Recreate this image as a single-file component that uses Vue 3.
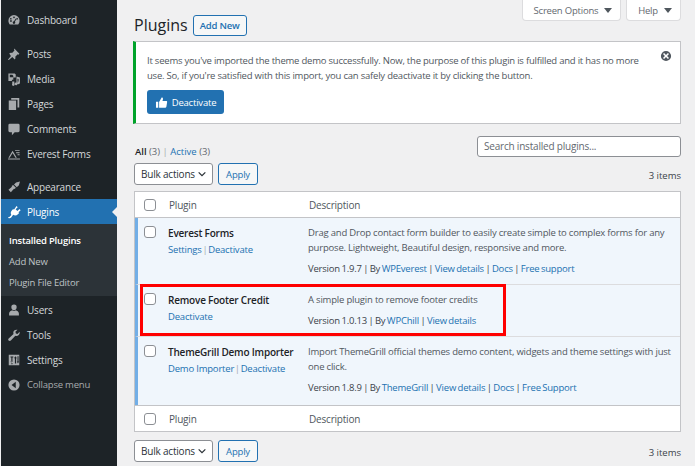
<script setup>
const menu1 = [{ id: 'posts', t: 'Posts' }, { id: 'media', t: 'Media' }, { id: 'pages', t: 'Pages' }, { id: 'comments', t: 'Comments' }, { id: 'everest', t: 'Everest Forms' }]
const menu3 = [{ id: 'users', t: 'Users' }, { id: 'tools', t: 'Tools' }, { id: 'settings', t: 'Settings' }]
const plugins = [
  { name: 'Everest Forms', cls: 'r1', actions: ['Settings', 'Deactivate'], desc: 'Drag and Drop contact form builder to easily create simple to complex forms for any purpose. Lightweight, Beautiful design, responsive and more.', ver: '1.9.7', by: 'WPEverest', links: ['View details', 'Docs', 'Free support'] },
  { name: 'Remove Footer Credit', cls: 'r2', actions: ['Deactivate'], desc: 'A simple plugin to remove footer credits', ver: '1.0.13', by: 'WPChill', links: ['View details'] },
  { name: 'ThemeGrill Demo Importer', cls: 'r3', actions: ['Demo Importer', 'Deactivate'], desc: 'Import ThemeGrill official themes demo content, widgets and theme settings with just one click.', ver: '1.8.9', by: 'ThemeGrill', links: ['View details', 'Docs', 'Free Support'] }
]
</script>

<template>
  <div class="page">
    <aside class="side">
      <div class="item first">
        <svg class="ic" viewBox="0 0 20 20"><path d="M10 3a8 8 0 0 0-8 8c0 2 .8 3.900 2 5.300h12a8 8 0 0 0 2-5.300 8 8 0 0 0-8-8zM10 5a1.200 1.200 0 1 1 0 2.400A1.200 1.200 0 0 1 10 5zM5.500 7a1.200 1.200 0 1 1 0 2.400 1.200 1.200 0 0 1 0-2.400zM14.500 7a1.200 1.200 0 1 1 0 2.400 1.200 1.200 0 0 1 0-2.400zM4.500 11.500a1.200 1.200 0 1 1 0 .1zM13.500 8.500l-2.200 4a1.800 1.800 0 1 1-1.300-.6l2.600-3.900z" fill-rule="evenodd"/></svg>
        <span>Dashboard</span>
      </div>
      <div class="group">
        <div v-for="m in menu1" :key="m.id" class="item">
          <svg class="ic" viewBox="0 0 20 20">
            <path v-if="m.id === 'posts'" d="M10.400 2.300l7.300 7.300-1.400 1.400-1-.6-3.500 3.500c.5 1.500.3 3-.7 4l-3.500-3.500-5 4-1.300-.3 4.300-5.400L3.200 9.300c1-1 2.500-1.200 4-.7l3.500-3.500-.6-1z"/>
            <path v-else-if="m.id === 'media'" fill-rule="evenodd" d="M2 2h9l1.500 1.500V8H9v3H7v2H2zM4 4v3.500h5V5.500L7.500 4zM13.500 6.500l5 1.200v7.800a2 2 0 1 1-2-2V10l-1.500-.4v7.400a2 2 0 1 1-1.500-2zM7.500 13.500h3v3.500a1.800 1.800 0 1 1-3 0z"/>
            <path v-else-if="m.id === 'pages'" d="M6 1.500h11.500V15H15V4H6zM2.500 5H13v13.500H2.500z"/>
            <path v-else-if="m.id === 'comments'" d="M4 2.500h12a2 2 0 0 1 2 2v8a2 2 0 0 1-2 2h-5l-4 4.500v-4.500H4a2 2 0 0 1-2-2v-8a2 2 0 0 1 2-2z"/>
            <path v-else fill-rule="evenodd" d="M1.500 16.500h17V18h-17zM2 15.200L8 5.500l6 9.700h-1.900L8 8.700l-4.100 6.500zM11.500 4.500h6.500v1.300h-6.500zM13 7.500h5v1.300h-5zM15 10.500h3v1.300h-3z"/>
          </svg>
          <span>{{ m.t }}</span>
        </div>
      </div>
      <div class="group2">
        <div class="item">
          <svg class="ic" viewBox="0 0 20 20"><path d="M13 3.500l5.500-1.500-1.500 5.500-3 3-4-4zM8.800 7.300l3.900 3.900-1.800 1.800-.9-.5-4.500 5-3.400-3.400 5-4.500-.5-.9z"/></svg>
          <span>Appearance</span>
        </div>
        <div class="item current">
          <svg class="ic white" viewBox="0 0 20 20"><path d="M13.600 1.500l1.700 1.700-3 3 2.500 2.500 3-3 1.700 1.700-3.100 3.100 1 1-1.800 1.800c-2 2-4.700 2.200-6.800.8L6 17.900c-.8.800-2 1.200-3.500 1l-1-1.300c1.600-.2 2-.5 2.900-1.400l1.800-1.800c-1.300-2.100-1.100-4.800.9-6.800l1.800-1.800 1 1z"/></svg>
          <span>Plugins</span>
          <i class="arrow"></i>
        </div>
      </div>
      <div class="sub">
        <div class="active">Installed Plugins</div>
        <div>Add New</div>
        <div>Plugin File Editor</div>
      </div>
      <div class="group3">
        <div v-for="m in menu3" :key="m.id" class="item">
          <svg class="ic" viewBox="0 0 20 20">
            <path v-if="m.id === 'users'" d="M10 2a3.800 3.800 0 0 1 3.800 4c0 2.200-1.700 4.500-3.800 4.500S6.200 8.200 6.200 6A3.800 3.800 0 0 1 10 2zM7.300 10.500c.8.700 1.700 1.100 2.700 1.100s1.900-.4 2.700-1.100c1.400.6 4.300 1.700 4.300 4.500v3H3v-3c0-2.800 2.900-3.900 4.300-4.500z"/>
            <path v-else-if="m.id === 'tools'" d="M18 5.500c.4 1.700 0 3.400-1.300 4.600-1.300 1.300-3.100 1.600-4.800 1L5.500 18c-.9.900-2.300.9-3.100 0-.9-.9-.9-2.200 0-3.100l6.900-6.400c-.6-1.700-.3-3.500 1-4.800C11.600 2.500 13.300 2.100 15 2.500l-3 3 .7 2.300 2.300.7z"/>
            <path v-else fill-rule="evenodd" d="M2.500 2.500h15v15h-15zM5 5v1.500h1.200V16h1.600V6.500H9V5zM12 4.500L10 7.500h1.300V15h1.700V7.500h1.200zM15 4.500V12H14l1.700 3 1.600-3H16.500V4.500zM5 12l1.700 3 1.700-3z"/>
          </svg>
          <span>{{ m.t }}</span>
        </div>
        <div class="item collapse">
          <svg class="ic" viewBox="0 0 20 20"><path fill-rule="evenodd" d="M10 2a8 8 0 1 1 0 16 8 8 0 0 1 0-16zM12.500 5.500L6.500 10l6 4.500z"/></svg>
          <span>Collapse menu</span>
        </div>
      </div>
    </aside>

    <main class="main">
      <div class="tabs">
        <div class="tab t1">Screen Options <i class="tri"></i></div>
        <div class="tab t2">Help <i class="tri"></i></div>
      </div>
      <div class="head">
        <h1>Plugins</h1>
        <span class="btn addnew">Add New</span>
      </div>
      <section class="notice">
        <p>It seems you've imported the theme demo successfully. Now, the purpose of this plugin is fulfilled and it has no more<br>use. So, if you're satisfied with this import, you can safely deactivate it by clicking the button.</p>
        <span class="primary">
          <svg viewBox="0 0 20 20" class="thumb"><path d="M1.500 9H5v9H1.500zM6.300 9.200L10 2.500c1.400-.2 2.300.7 2.300 2 0 1-.5 2.200-.9 3h5.800c1.100 0 1.700.9 1.500 1.900l-1.200 7c-.2.900-.8 1.600-1.800 1.600H6.300z"/></svg>
          Deactivate
        </span>
        <svg class="close" viewBox="0 0 20 20"><path fill-rule="evenodd" d="M10 1.500a8.500 8.500 0 1 1 0 17 8.500 8.500 0 0 1 0-17zM6.800 5L5 6.800 8.200 10 5 13.200 6.800 15 10 11.800 13.200 15l1.800-1.800L11.800 10 15 6.800 13.200 5 10 8.200z"/></svg>
      </section>
      <div class="filter">
        <div class="subs"><b>All</b> <span class="cnt">(3)</span> <span class="sep">|</span> <a>Active</a> <span class="cnt">(3)</span></div>
        <div class="search">Search installed plugins...</div>
      </div>
      <div class="nav top">
        <div class="bulk">Bulk actions
          <svg viewBox="0 0 12 12" class="chev"><path d="M2 4l4 4 4-4" fill="none" stroke="#2c3338" stroke-width="1.500"/></svg>
        </div>
        <span class="btn apply">Apply</span>
        <span class="items">3 items</span>
      </div>
      <div class="table">
        <div class="row hd">
          <div class="cb"><i class="box"></i></div>
          <div class="c-name"><span>Plugin</span></div>
          <div class="c-desc"><span>Description</span></div>
        </div>
        <div v-for="p in plugins" :key="p.name" class="row pl" :class="p.cls">
          <div class="cb"><i class="box"></i></div>
          <div class="c-name">
            <strong>{{ p.name }}</strong>
            <div class="acts">
              <template v-for="(a, i) in p.actions" :key="a"><span v-if="i" class="pipe"> | </span><a>{{ a }}</a></template>
            </div>
          </div>
          <div class="c-desc">
            <p class="d">{{ p.desc }}</p>
            <p class="v">Version {{ p.ver }} | By <a>{{ p.by }}</a><template v-for="l in p.links" :key="l"> | <a>{{ l }}</a></template></p>
          </div>
        </div>
        <div class="row hd ft">
          <div class="cb"><i class="box"></i></div>
          <div class="c-name"><span>Plugin</span></div>
          <div class="c-desc"><span>Description</span></div>
        </div>
      </div>
      <div class="nav bot">
        <div class="bulk">Bulk actions
          <svg viewBox="0 0 12 12" class="chev"><path d="M2 4l4 4 4-4" fill="none" stroke="#2c3338" stroke-width="1.500"/></svg>
        </div>
        <span class="btn apply">Apply</span>
        <span class="items">3 items</span>
      </div>
      <div class="redbox"></div>
    </main>
  </div>
</template>

<style>
html, body { margin: 0; padding: 0; background: #f0f0f1; }
</style>

<style scoped>
.page { display: flex; width: 695px; height: 466px; overflow: hidden; background: #f0f0f1; font-family: "Open Sans", "Noto Sans", sans-serif; font-size: 10px; letter-spacing: -0.2px; color: #3c434a; }
.side { width: 116px; margin-left: 1px; flex: none; background: #1d2327; color: #d5d8da; }
.item { position: relative; display: flex; align-items: center; height: 25px; padding-left: 6px; gap: 6px; font-size: 10px; }
.item.first { margin-top: 7px; }
.group { margin-top: 9px; }
.group2 { margin-top: 8px; }
.ic { width: 14px; height: 14px; fill: #a7aaad; flex: none; }
.ic.white { fill: #fff; }
.current { background: #2271b1; color: #fff; }
.arrow { position: absolute; right: 0; top: 8px; border: 5px solid transparent; border-right-color: #f0f0f1; border-left: 0; }
.sub { background: #2c3338; color: #bfc3c6; height: 72px; padding-top: 6px; box-sizing: border-box; padding-left: 8px; font-size: 9.5px; }
.sub div { height: 21px; line-height: 21px; }
.sub .active { color: #fff; font-weight: 600; }
.group3 { margin-top: 1px; }
.item.collapse { color: #a7aaad; font-size: 9.5px; }
.main { position: relative; flex: 1; padding-left: 16px; padding-right: 14px; min-width: 0; }
.tabs { display: flex; justify-content: flex-end; gap: 5px; height: 0; }
.tab { height: 21px; background: #fff; border: 1px solid #dcdcde; border-top: 0; border-radius: 0 0 4px 4px; box-sizing: border-box; color: #646970; display: flex; align-items: center; justify-content: center; gap: 6px; font-size: 9.5px; }
.t1 { width: 99px; padding-left: 3px; }
.t2 { width: 55px; padding-left: 3px; }
.tri { border: 4px solid transparent; border-top: 5px solid #50575e; border-bottom: 0; }
.head { display: flex; align-items: center; gap: 5px; height: 41px; padding-top: 9px; box-sizing: border-box; padding-left: 1px; }
h1 { margin: 0; font-size: 16px; font-weight: 400; letter-spacing: 0; color: #1d2327; line-height: 22px; }
.btn { display: inline-flex; align-items: center; justify-content: center; box-sizing: border-box; border: 1px solid #2271b1; border-radius: 3px; background: #f6f7f7; color: #2271b1; }
.addnew { width: 54px; height: 21px; font-size: 9.5px; font-weight: 600; }
.notice { position: relative; height: 83px; box-sizing: border-box; background: #fff; border: 1px solid #c3c4c7; border-left: 3px solid #00a32a; padding: 11px 0 0 11px; }
.notice p { margin: 0; font-size: 9.5px; letter-spacing: -0.22px; line-height: 15px; color: #50575e; }
.primary { display: inline-flex; align-items: center; justify-content: center; gap: 4px; margin-top: 7px; width: 77px; height: 24px; border-radius: 3px; background: #2271b1; color: #fff; font-size: 9.5px; }
.thumb { width: 13px; height: 13px; fill: #fff; }
.close { position: absolute; right: 8px; top: 8px; width: 12px; height: 12px; fill: #50575e; }
.filter { display: flex; justify-content: space-between; height: 40px; padding-top: 12px; box-sizing: border-box; }
.subs { padding-left: 2px; padding-top: 9px; font-size: 9.5px; letter-spacing: 0; color: #646970; }
.subs b { color: #1d2327; font-weight: 600; }
.sep { color: #a7aaad; }
.search { width: 204px; height: 21px; box-sizing: border-box; background: #fff; border: 1px solid #8c8f94; border-radius: 3px; padding-left: 6px; line-height: 19px; font-size: 10px; color: #646970; }
.nav { display: flex; align-items: center; gap: 5px; height: 22px; padding-left: 1px; }
.top { margin-top: -1px; margin-bottom: 6px; }
.bot { margin-top: 8px; }
.bulk { width: 79px; height: 22px; box-sizing: border-box; background: #fff; border: 1px solid #8c8f94; border-radius: 3px; padding-left: 6px; line-height: 20px; font-size: 10px; color: #2c3338; position: relative; }
.chev { position: absolute; right: 5px; top: 5px; width: 10px; height: 10px; }
.apply { width: 40px; height: 22px; font-size: 9.5px; }
.items { margin-left: auto; font-size: 9.5px; padding-top: 2px; letter-spacing: 0; }
.table { margin-left: 1px; border: 1px solid #c3c4c7; background: #fff; height: 241px; box-sizing: border-box; }
.row { display: grid; grid-template-columns: 34px 140px 1fr; box-sizing: border-box; }
.hd { height: 26px; align-items: center; border-bottom: 1px solid #c3c4c7; color: #50575e; font-size: 10px; }
.ft { border-bottom: 0; border-top: 1px solid #c3c4c7; }
.cb { padding-left: 9px; display: flex; }
.box { display: block; width: 12px; height: 12px; box-sizing: border-box; border: 1px solid #8c8f94; border-radius: 3px; background: #fff; }
.pl { grid-template-columns: 30px 140px 1fr; background: #f0f6fc; border-left: 3px solid #72aee6; border-bottom: 1px solid #dcdcde; padding-top: 8px; }
.pl .cb { padding-left: 6px; }
.r1 { height: 67px; }
.r2 { height: 52px; }
.r3 { height: 68px; border-bottom: 0; }
.c-name strong { display: block; font-size: 10px; font-weight: 600; color: #1d2327; line-height: 15px; }
.acts { margin-top: 1px; font-size: 9.5px; line-height: 15px; color: #2271b1; }
.pipe { color: #a7aaad; word-spacing: -1.5px; }
a { color: #2271b1; }
.c-desc p { margin: 0; }
.d { font-size: 9.5px; line-height: 14.5px; color: #50575e; }
.c-desc .v { margin-top: 5.5px; font-size: 9.5px; line-height: 15px; word-spacing: -0.8px; }
.redbox { position: absolute; left: 23px; top: 284px; width: 366px; height: 52px; box-sizing: border-box; border: 3px solid #f00; }
</style>
